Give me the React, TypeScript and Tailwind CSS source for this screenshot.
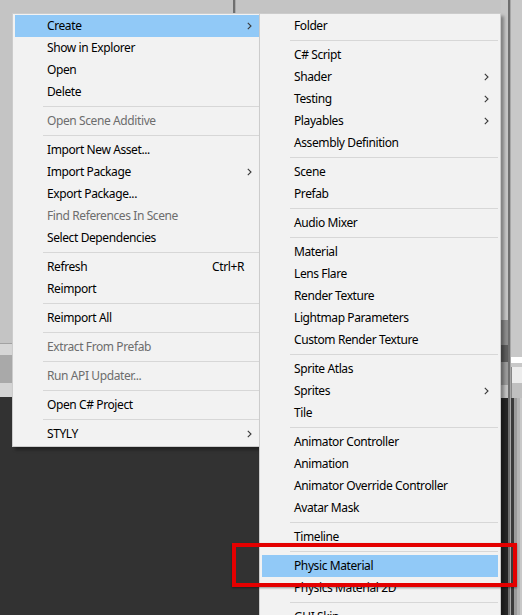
import React from 'react';

type Item =
  | { kind: 'sep' }
  | { kind: 'item'; text: string; sub?: boolean; disabled?: boolean; active?: boolean; shortcut?: string };

const sep: Item = { kind: 'sep' };
const it = (text: string, extra: Partial<Omit<Extract<Item, { kind: 'item' }>, 'kind' | 'text'>> = {}): Item => ({
  kind: 'item',
  text,
  ...extra,
});

const assetMenu: Item[] = [
  it('Create', { sub: true, active: true }),
  it('Show in Explorer'),
  it('Open'),
  it('Delete'),
  sep,
  it('Open Scene Additive', { disabled: true }),
  sep,
  it('Import New Asset...'),
  it('Import Package', { sub: true }),
  it('Export Package...'),
  it('Find References In Scene', { disabled: true }),
  it('Select Dependencies'),
  sep,
  it('Refresh', { shortcut: 'Ctrl+R' }),
  it('Reimport'),
  sep,
  it('Reimport All'),
  sep,
  it('Extract From Prefab', { disabled: true }),
  sep,
  it('Run API Updater...', { disabled: true }),
  sep,
  it('Open C# Project'),
  sep,
  it('STYLY', { sub: true }),
];

const createMenu: Item[] = [
  it('Folder'),
  sep,
  it('C# Script'),
  it('Shader', { sub: true }),
  it('Testing', { sub: true }),
  it('Playables', { sub: true }),
  it('Assembly Definition'),
  sep,
  it('Scene'),
  it('Prefab'),
  sep,
  it('Audio Mixer'),
  sep,
  it('Material'),
  it('Lens Flare'),
  it('Render Texture'),
  it('Lightmap Parameters'),
  it('Custom Render Texture'),
  sep,
  it('Sprite Atlas'),
  it('Sprites', { sub: true }),
  it('Tile'),
  sep,
  it('Animator Controller'),
  it('Animation'),
  it('Animator Override Controller'),
  it('Avatar Mask'),
  sep,
  it('Timeline'),
  sep,
  it('Physic Material', { active: true }),
  it('Physics Material 2D'),
  sep,
  it('GUI Skin'),
  it('Custom Font'),
];

function Chevron() {
  return (
    <svg width="5" height="8" viewBox="0 0 5 8" className="block">
      <path d="M0.8 0.8 L4 4 L0.8 7.2" fill="none" stroke="#3a3a3a" strokeWidth="1.1" />
    </svg>
  );
}

function MenuRows({ items }: { items: Item[] }) {
  return (
    <>
      {items.map((m, i) =>
        m.kind === 'sep' ? (
          <div key={i} className="h-[7px] flex items-center pl-[28px]">
            <div className="h-px w-full bg-[#d7d7d7]" />
          </div>
        ) : (
          <div
            key={i}
            className={`h-[22px] flex items-center pl-[32px] pr-[9px] pb-px ${m.active ? 'bg-[#91c9f7]' : ''}`}
          >
            <span className={`flex-1 whitespace-nowrap ${m.disabled ? 'text-[#6d6d6d]' : 'text-[#000000]'}`}>
              {m.text}
            </span>
            {m.shortcut && <span className="mr-[8px] text-black">{m.shortcut}</span>}
            {m.sub && <Chevron />}
          </div>
        )
      )}
    </>
  );
}

export default function App() {
  return (
    <div
      className="relative w-[522px] h-[615px] overflow-hidden text-[12px] leading-none tracking-[-0.4px]"
      style={{ fontFamily: '"Noto Sans", "Open Sans", sans-serif' }}
    >
      {/* editor background */}
      <div className="flex h-full">
        <div className="flex flex-col w-[501px]">
          <div className="flex h-[343px] bg-[#c4c4c4]">
            <div className="w-[233px]" />
            <div className="w-[2px] bg-[#6f6f6f]" />
            <div className="w-px bg-[#a9a9a9]" />
          </div>
          <div className="h-px bg-[#a2a2a2]" />
          <div className="h-[11px] bg-[#d6d6d6]" />
          <div className="h-[28px] bg-[#a9a9a9]" />
          <div className="h-[14px] bg-[#d4d4d4]" />
          <div className="flex-1 bg-[#323232]" />
        </div>
        <div className="flex w-[7px] flex-col">
          <div className="h-[320px] bg-[#c6c6c6]" />
          <div className="h-[25px] bg-[#8e8e8e]" />
          <div className="h-[17px] bg-[#5e5e5e]" />
          <div className="h-[23px] bg-[#9c9c9c]" />
          <div className="h-[13px] bg-[#c4c4c4]" />
          <div className="flex-1 bg-[#262626]" />
        </div>
        <div className="w-[2px] bg-[#6f6f6f]" />
        <div className="w-px bg-[#a6a6a6]" />
        <div className="flex flex-1 flex-col">
          <div className="h-[357px] bg-[#c8c8c8]" />
          <div className="h-[6px] bg-[#ffffff]" />
          <div className="h-[4px] bg-[#c8c8c8]" />
          <div className="h-[16px] bg-[#ececec] border-l border-[#888]" />
          <div className="h-[15px] bg-[#c0c0c0] border-l border-[#888]" />
          <div className="flex flex-1">
            <div className="w-[3px] bg-[#3a3a3a]" />
            <div className="w-[3px] bg-[#9a9a9a]" />
            <div className="w-[3px] bg-[#b4b4b4]" />
            <div className="flex-1 bg-[#c8c8c8]" />
          </div>
        </div>
      </div>

      {/* asset context menu */}
      <div className="absolute left-[12px] top-[13px] w-[252px] border border-[#cccccc] bg-[#f2f2f2] px-[2px] py-px shadow-[3px_3px_3px_rgba(0,0,0,0.35)]">
        <MenuRows items={assetMenu} />
      </div>

      {/* create submenu */}
      <div className="absolute left-[259px] top-[13px] w-[242px] border border-[#cccccc] bg-[#f2f2f2] px-[2px] py-px shadow-[3px_3px_3px_rgba(0,0,0,0.35)]">
        <MenuRows items={createMenu} />
      </div>

      {/* annotation */}
      <div className="absolute left-[232px] top-[543px] w-[285px] h-[44px] border-[4px] border-[#e40000] shadow-[0_1px_2px_rgba(0,0,0,0.4)]" />
    </div>
  );
}
